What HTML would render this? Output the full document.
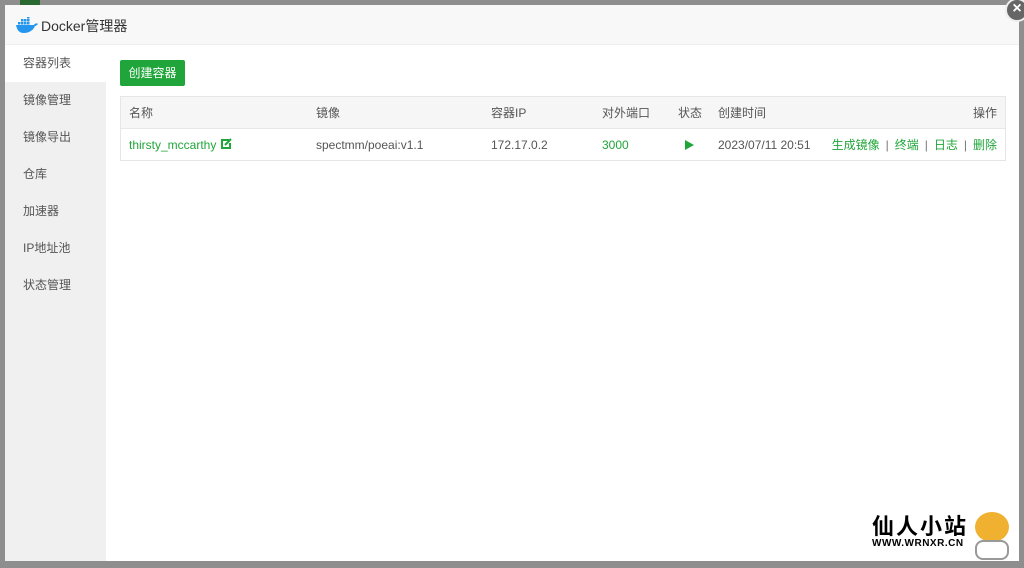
<!DOCTYPE html>
<html><head><meta charset="utf-8"><style>
*{margin:0;padding:0;box-sizing:border-box}
body{width:1024px;height:568px;background:#8e8e8e;position:relative;overflow:hidden;font-family:"Liberation Sans","Noto Sans CJK SC",sans-serif;font-size:12px;color:#555}
.modal{position:absolute;left:5px;top:5px;width:1014px;height:556px;background:#fff}
.hd{height:40px;background:#f8f8f8;border-bottom:1px solid #eee;position:relative}
.hd .t{position:absolute;left:36px;top:11px;font-size:14px;color:#333}
.side{position:absolute;left:0;top:40px;width:101px;bottom:0;background:#f0f0f0}
.side div{height:37px;line-height:37px;padding-left:18px;color:#555}
.side div.on{background:#fff}
.btn{position:absolute;left:115px;top:55px;width:65px;height:26px;background:#20a53a;color:#fff;border-radius:2px;text-align:center;line-height:26px}
.tbl{position:absolute;left:115px;top:91px;width:886px;height:65px;border:1px solid #e6e6e6}
.row{position:absolute;left:0;width:884px;height:32px;line-height:32px}
.r1{top:0;background:#f6f6f6;border-bottom:1px solid #e8e8e8}
.r2{top:32px}
.row span{position:absolute}
.g{color:#20a53a}
.sep{margin:0 6px;color:#777}
.close{position:absolute;left:1005px;top:-2px;width:24px;height:24px;border-radius:50%;background:#666;border:2px solid #eee;color:#fff;text-align:center;line-height:18px;font-size:16px;font-weight:bold}
.wm{position:absolute;left:872px;top:512px}
</style></head><body>
<div style="position:absolute;left:20px;top:0;width:20px;height:5px;background:#2a6a32"></div>
<div class="modal">
 <div class="hd">
  <svg style="position:absolute;left:10px;top:12px" width="23" height="16" viewBox="0 0 23 16"><path d="M1 8h18c1-2 3-2 4-1-1 1-2 2-3 2-2 5-7 7-11 7-5 0-7-3-8-8z" fill="#2496ed"/><g fill="#2496ed"><rect x="3" y="5" width="2.5" height="2.5"/><rect x="6" y="5" width="2.5" height="2.5"/><rect x="9" y="5" width="2.5" height="2.5"/><rect x="12" y="5" width="2.5" height="2.5"/><rect x="6" y="2" width="2.5" height="2.5"/><rect x="9" y="2" width="2.5" height="2.5"/><rect x="12" y="2" width="2.5" height="2.5"/><rect x="12" y="-1" width="2.5" height="2.5"/></g></svg>
  <div class="t">Docker管理器</div>
 </div>
 <div class="side">
  <div class="on">容器列表</div><div>镜像管理</div><div>镜像导出</div><div>仓库</div><div>加速器</div><div>IP地址池</div><div>状态管理</div>
 </div>
 <div class="btn">创建容器</div>
 <div class="tbl">
  <div class="row r1"><span style="left:8px">名称</span><span style="left:195px">镜像</span><span style="left:370px">容器IP</span><span style="left:481px">对外端口</span><span style="left:557px">状态</span><span style="left:597px">创建时间</span><span style="right:8px">操作</span></div>
  <div class="row r2"><span style="left:8px" class="g">thirsty_mccarthy <svg width="12" height="12" viewBox="0 0 12 12" style="vertical-align:-1px"><path d="M9 2H2v8h8V5" fill="none" stroke="#20a53a" stroke-width="2"/><path d="M5 7l6-6" stroke="#20a53a" stroke-width="2"/></svg></span><span style="left:195px">spectmm/poeai:v1.1</span><span style="left:370px">172.17.0.2</span><span style="left:481px" class="g">3000</span><span style="left:564px;top:11px;width:0;height:0;border-left:9px solid #20a53a;border-top:5px solid transparent;border-bottom:5px solid transparent"></span><span style="left:597px">2023/07/11 20:51</span><span style="right:8px"><span style="position:static" class="g">生成镜像</span><span style="position:static" class="sep">|</span><span style="position:static" class="g">终端</span><span style="position:static" class="sep">|</span><span style="position:static" class="g">日志</span><span style="position:static" class="sep">|</span><span style="position:static" class="g">删除</span></span></div>
 </div>
</div>
<div class="close">×</div>
<div class="wm"><div style="font-size:22px;font-weight:bold;color:#000;font-family:'Noto Sans CJK SC',sans-serif;line-height:26px;letter-spacing:2px">仙人小站</div><div style="font-size:10px;font-weight:bold;color:#000;line-height:12px;letter-spacing:0.5px">WWW.WRNXR.CN</div></div>
<div style="position:absolute;left:975px;top:512px;width:34px;height:30px;border-radius:50%;background:#f0b030"></div>
<div style="position:absolute;left:975px;top:540px;width:34px;height:20px;border:2px solid #999;border-radius:8px;background:#fff"></div>
</body></html>
